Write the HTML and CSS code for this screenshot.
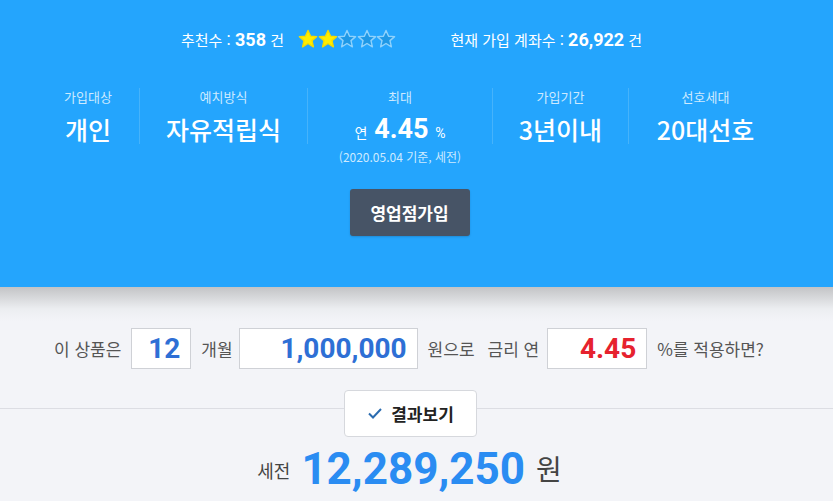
FILE: index.html
```html
<!DOCTYPE html>
<html lang="ko">
<head>
  <meta charset="UTF-8" />
  <meta name="viewport" content="width=device-width, initial-scale=1.0" />
  <title>자유적립식 상품</title>
  <link rel="stylesheet" href="styles.css">
</head>
<body>
  <section class="product">
    <div class="stats">
      <span class="stat">추천수 : <b>358</b> 건</span>
      <span class="stars">
        <svg viewBox="0 0 20 20" class="star on"><polygon points="10,1.5 12.6,7.2 18.6,7.6 14,11.6 15.4,17.8 10,14.5 4.6,17.8 6,11.6 1.4,7.6 7.4,7.2"/></svg>
        <svg viewBox="0 0 20 20" class="star on"><polygon points="10,1.5 12.6,7.2 18.6,7.6 14,11.6 15.4,17.8 10,14.5 4.6,17.8 6,11.6 1.4,7.6 7.4,7.2"/></svg>
        <svg viewBox="0 0 20 20" class="star"><polygon points="10,1.5 12.6,7.2 18.6,7.6 14,11.6 15.4,17.8 10,14.5 4.6,17.8 6,11.6 1.4,7.6 7.4,7.2"/></svg>
        <svg viewBox="0 0 20 20" class="star"><polygon points="10,1.5 12.6,7.2 18.6,7.6 14,11.6 15.4,17.8 10,14.5 4.6,17.8 6,11.6 1.4,7.6 7.4,7.2"/></svg>
        <svg viewBox="0 0 20 20" class="star"><polygon points="10,1.5 12.6,7.2 18.6,7.6 14,11.6 15.4,17.8 10,14.5 4.6,17.8 6,11.6 1.4,7.6 7.4,7.2"/></svg>
      </span>
      <span class="stat accounts">현재 가입 계좌수 : <b>26,922</b> 건</span>
    </div>

    <ul class="info">
      <li class="col-target">
        <span class="label">가입대상</span>
        <strong class="value">개인</strong>
      </li>
      <li class="col-type">
        <span class="label">예치방식</span>
        <strong class="value">자유적립식</strong>
      </li>
      <li class="col-rate">
        <span class="label">최대</span>
        <strong class="value"><small>연</small> 4.45 <small>%</small></strong>
        <span class="note">(2020.05.04 기준, 세전)</span>
      </li>
      <li class="col-term">
        <span class="label">가입기간</span>
        <strong class="value">3년이내</strong>
      </li>
      <li class="col-age">
        <span class="label">선호세대</span>
        <strong class="value">20대선호</strong>
      </li>
    </ul>

    <div class="join">
      <button class="btn-join">영업점가입</button>
    </div>
  </section>

  <section class="calc">
    <div class="calc-row">
      <span>이 상품은</span>
      <input class="box box-month" type="text" value="12">
      <span class="unit">개월</span>
      <input class="box box-amount" type="text" value="1,000,000">
      <span>원으로</span>
      <span class="gap">금리 연</span>
      <input class="box box-rate" type="text" value="4.45">
      <span>%를 적용하면?</span>
    </div>

    <div class="result">
      <button class="btn-result">
        <svg viewBox="0 0 16 16" class="check"><polyline points="2,8.5 6,12.5 14,4"/></svg>
        결과보기
      </button>
      <p class="total">세전 <strong>12,289,250</strong> <span class="won">원</span></p>
    </div>
  </section>
</body>
</html>
```

FILE: styles.css
```css
body {
  margin: 0;
  font-family: "Noto Sans CJK KR", "Noto Sans", sans-serif;
  background: #f3f4f8;
  color: #444;
}
.product {
  background-color: #24a5fd;
  color: white;
  height: 287px;
  box-sizing: border-box;
  padding-top: 27px;
}
.stats {
  display: flex;
  align-items: center;
  height: 24px;
  padding-left: 181px;
  font-size: 15px;
}
.stats b {
  font-size: 18px;
  font-weight: bold;
  font-family: Roboto, "Noto Sans CJK KR", sans-serif;
}
.stars {
  display: flex;
  margin-left: 14px;
  margin-right: 55px;
}
.star {
  width: 20px;
  height: 20px;
  margin-right: -0.5px;
}
.star polygon {
  fill: #1f98e6;
  stroke: #8fd2fc;
  stroke-width: 1.4;
  stroke-linejoin: round;
}
.star.on polygon {
  fill: #ffee00;
  stroke: #f5dc00;
}
.info {
  display: flex;
  list-style: none;
  margin: 37px 0 0 37px;
  padding: 0;
}
.info li {
  display: flex;
  flex-direction: column;
  align-items: center;
  box-sizing: border-box;
  border-left: 1px solid #46b3fb;
  height: 56px;
}
.info li:first-child {
  border-left: none;
}
.col-target { width: 102px; }
.col-type { width: 168px; }
.col-rate { width: 185px; }
.col-term { width: 136px; }
.col-age { width: 154px; }
.label {
  font-size: 13px;
  line-height: 18px;
  color: #cdeaff;
}
.value {
  margin-top: 7px;
  font-size: 25px;
  line-height: 32px;
  font-weight: 500;
}
.col-rate .value {
  font-size: 27px;
  font-weight: bold;
  font-family: Roboto, "Noto Sans CJK KR", sans-serif;
}
.value small {
  font-size: 14px;
  font-weight: normal;
}
.note {
  font-size: 12px;
  line-height: 16px;
  color: #cdeaff;
  white-space: nowrap;
}
.join {
  display: flex;
  justify-content: center;
  padding-right: 14px;
  margin-top: 45px;
}
.btn-join {
  width: 120px;
  height: 47px;
  border: none;
  border-radius: 3px;
  background-color: #475466;
  color: white;
  font-family: inherit;
  font-size: 17px;
  font-weight: bold;
  box-shadow: 0 1px 2px rgba(0, 0, 0, 0.15);
}
.calc {
  background: linear-gradient(to bottom, #c3c4c6 0, #eceef1 22px, #f3f4f8 34px);
  padding-top: 41px;
}
.calc-row {
  display: flex;
  align-items: center;
  padding-left: 54px;
  font-size: 17px;
  color: #555;
}
.calc-row span {
  margin-right: 8px;
}
.calc-row span:first-child {
  margin-right: 10px;
}
.calc-row .unit {
  margin-right: 6px;
}
.calc-row .gap {
  margin-left: 5px;
}
.box {
  height: 41px;
  box-sizing: border-box;
  border: 1px solid #cfd1d6;
  background: white;
  text-align: right;
  padding: 0 10px;
  margin-right: 10px;
  font-family: Roboto, "Noto Sans CJK KR", sans-serif;
  font-size: 28px;
  font-weight: bold;
  color: #2e6fd5;
}
.box-month { width: 60px; }
.box-amount { width: 179px; }
.box-rate {
  width: 100px;
  color: #e6222e;
}
.result {
  margin-top: 39px;
  border-top: 1px solid #dcdde3;
  text-align: center;
  padding-right: 14px;
}
.btn-result {
  display: inline-flex;
  align-items: center;
  justify-content: center;
  gap: 8px;
  width: 133px;
  height: 47px;
  margin-top: -19px;
  margin-left: 2px;
  background: white;
  border: 1px solid #d6d8dd;
  border-radius: 4px;
  font-family: inherit;
  font-size: 17px;
  font-weight: bold;
  color: #222;
  transform: translateY(-7px);
}
.check {
  width: 16px;
  height: 16px;
}
.check polyline {
  fill: none;
  stroke: #2b6cb0;
  stroke-width: 2;
}
.total {
  margin: -1px 0 0 0;
  font-size: 18px;
  color: #444;
  line-height: 50px;
}
.total strong {
  font-family: Roboto, "Noto Sans CJK KR", sans-serif;
  font-size: 44px;
  font-weight: bold;
  color: #2a8cf2;
  margin: 0 6px;
  vertical-align: -6px;
}
.won {
  font-size: 28px;
  vertical-align: -2px;
}
```
